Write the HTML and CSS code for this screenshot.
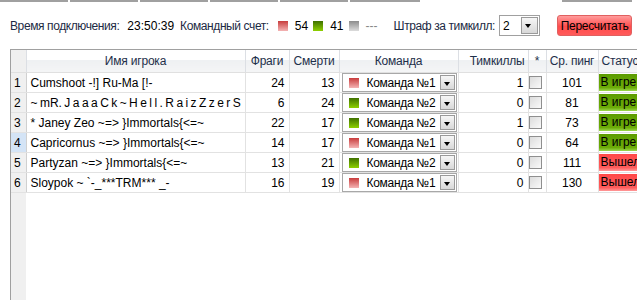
FILE: index.html
```html
<!DOCTYPE html>
<html lang="ru">
  <head>
    <meta charset="UTF-8" />
    <title>Игроки</title>
    <link rel="stylesheet" href="styles.css">
  </head>
  <body>
    <div class="tabs">
      <span class="tab t1"></span><span class="tab t2"></span><span class="tab t3"></span><span class="tab t4"></span><span class="tab t5"></span><span class="tab t6"></span><span class="tab t7"></span>
    </div>

    <div class="toolbar">
      <span class="label">Время подключения:</span>
      <span class="time">23:50:39</span>
      <span class="label score-label">Командный счет:</span>
      <span class="swatch red first"></span><span class="value">54</span>
      <span class="swatch green"></span><span class="value">41</span>
      <span class="swatch gray"></span><span class="value dim">---</span>
      <span class="label fine-label">Штраф за тимкилл:</span>
      <span class="select small"><span class="select-text">2</span><span class="drop"></span></span>
      <button class="recalc">Пересчитать</button>
    </div>

    <div class="grid">
      <table>
        <colgroup>
          <col class="c-num" /><col class="c-name" /><col class="c-frags" /><col class="c-deaths" />
          <col class="c-team" /><col class="c-tk" /><col class="c-star" /><col class="c-ping" /><col class="c-status" />
        </colgroup>
        <thead>
          <tr>
            <th></th>
            <th>Имя игрока</th>
            <th>Фраги</th>
            <th>Смерти</th>
            <th>Команда</th>
            <th class="right">Тимкиллы</th>
            <th>*</th>
            <th>Ср. пинг</th>
            <th class="left">Статус</th>
          </tr>
        </thead>
        <tbody>
          <tr>
            <td class="num">1</td>
            <td class="name">Cumshoot -!] Ru-Ma [!-</td>
            <td class="right">24</td>
            <td class="right">13</td>
            <td class="team"><span class="select"><span class="swatch red"></span><span class="select-text">Команда №1</span><span class="drop"></span></span></td>
            <td class="right">1</td>
            <td class="star"><span class="check"></span></td>
            <td class="center">101</td>
            <td><span class="status ingame">В игре</span></td>
          </tr>
          <tr>
            <td class="num">2</td>
            <td class="name spaced">~ mR. J a a a C k ~ H e l l . R a i z Z z e r S</td>
            <td class="right">6</td>
            <td class="right">24</td>
            <td class="team"><span class="select"><span class="swatch green"></span><span class="select-text">Команда №2</span><span class="drop"></span></span></td>
            <td class="right">0</td>
            <td class="star"><span class="check"></span></td>
            <td class="center">81</td>
            <td><span class="status ingame">В игре</span></td>
          </tr>
          <tr>
            <td class="num">3</td>
            <td class="name">* Janey Zeo ~=&gt; }Immortals{&lt;=~</td>
            <td class="right">22</td>
            <td class="right">17</td>
            <td class="team"><span class="select"><span class="swatch green"></span><span class="select-text">Команда №2</span><span class="drop"></span></span></td>
            <td class="right">1</td>
            <td class="star"><span class="check"></span></td>
            <td class="center">73</td>
            <td><span class="status ingame">В игре</span></td>
          </tr>
          <tr>
            <td class="num current">4</td>
            <td class="name">Capricornus ~=&gt; }Immortals{&lt;=~</td>
            <td class="right">14</td>
            <td class="right">17</td>
            <td class="team"><span class="select"><span class="swatch red"></span><span class="select-text">Команда №1</span><span class="drop"></span></span></td>
            <td class="right">0</td>
            <td class="star"><span class="check"></span></td>
            <td class="center">64</td>
            <td><span class="status ingame">В игре</span></td>
          </tr>
          <tr>
            <td class="num">5</td>
            <td class="name">Partyzan ~=&gt; }Immortals{&lt;=~</td>
            <td class="right">13</td>
            <td class="right">21</td>
            <td class="team"><span class="select"><span class="swatch green"></span><span class="select-text">Команда №2</span><span class="drop"></span></span></td>
            <td class="right">0</td>
            <td class="star"><span class="check"></span></td>
            <td class="center">111</td>
            <td><span class="status left-game">Вышел</span></td>
          </tr>
          <tr>
            <td class="num">6</td>
            <td class="name">Sloypok ~ `-_***TRM*** _-</td>
            <td class="right">16</td>
            <td class="right">19</td>
            <td class="team"><span class="select"><span class="swatch red"></span><span class="select-text">Команда №1</span><span class="drop"></span></span></td>
            <td class="right">0</td>
            <td class="star"><span class="check"></span></td>
            <td class="center">130</td>
            <td><span class="status left-game">Вышел</span></td>
          </tr>
        </tbody>
      </table>
    </div>
  </body>
</html>
```

FILE: styles.css
```css
body {
  margin: 0;
  font-family: "Liberation Sans", Arial, sans-serif;
  font-size: 12px;
  color: #000;
  background: #fff;
  overflow: hidden;
}
.tabs {
  display: flex;
  height: 2px;
}
.tab {
  height: 2px;
  background-color: #a0a0a0;
  margin-right: 2px;
}
.t1 { width: 68px; }
.t2 { width: 68px; }
.t3 { width: 68px; }
.t4 { width: 68px; }
.t5 { width: 68px; }
.t6 { width: 70px; margin-right: 142px; }
.t7 { width: 70px; }
.toolbar {
  display: flex;
  align-items: center;
  height: 47px;
  padding-left: 10px;
  white-space: nowrap;
}
.toolbar > * {
  flex-shrink: 0;
}
.label {
  color: #1c2a44;
  letter-spacing: -0.4px;
}
.time {
  margin-left: 8px;
}
.score-label {
  margin-left: 6px;
}
.value {
  margin: 0 5px 0 7px;
}
.dim {
  color: #888;
}
.fine-label {
  margin-left: 11px;
}
.swatch {
  display: inline-block;
  flex-shrink: 0;
  width: 10px;
  height: 10px;
}
.swatch.first {
  margin-left: 9px;
}
.swatch.red {
  background: linear-gradient(#c83c3c, #f4b4b4);
}
.swatch.green {
  background: linear-gradient(#3f7000, #8ed000);
}
.swatch.gray {
  background: linear-gradient(#8c8c8c, #dcdcdc);
}
.select {
  display: flex;
  align-items: center;
  box-sizing: border-box;
  border: 1px solid #a0a0a0;
  background: #fff;
  padding: 1px;
}
.select.small {
  width: 41px;
  height: 21px;
  margin-left: 4px;
  padding-left: 3px;
}
.select-text {
  flex: 1;
  letter-spacing: -0.3px;
}
.drop {
  box-sizing: border-box;
  flex-shrink: 0;
  width: 17px;
  height: 100%;
  border: 1px solid #9a9a9a;
  background: linear-gradient(#f6f6f6, #d8d8d8);
  position: relative;
}
.drop::after {
  content: "";
  position: absolute;
  left: 3px;
  top: 6px;
  border-left: 3.5px solid transparent;
  border-right: 3.5px solid transparent;
  border-top: 4px solid #000;
}
.recalc {
  margin-left: 17px;
  width: 75px;
  height: 21px;
  padding: 0;
  font: inherit;
  letter-spacing: -0.3px;
  color: #000;
  border: 1px solid #e06060;
  border-radius: 3px;
  background: linear-gradient(#ff9c9c, #ff4c4c 55%, #ff5a5a);
}
.grid {
  margin-left: 10px;
  height: 251px;
  border-top: 1px solid #a0a0a0;
  border-left: 1px solid #a0a0a0;
  background: linear-gradient(to right, #f0f0f0 15px, #fff 15px);
}
table {
  border-collapse: collapse;
  table-layout: fixed;
  width: 700px;
}
.c-num { width: 15px; }
.c-name { width: 219px; }
.c-frags { width: 44px; }
.c-deaths { width: 50px; }
.c-team { width: 119px; }
.c-tk { width: 70px; }
.c-star { width: 18px; }
.c-ping { width: 52px; }
.c-status { width: 113px; }
th {
  height: 22px;
  padding: 0 3px;
  font-weight: normal;
  letter-spacing: -0.2px;
  color: #1e2f4a;
  background: linear-gradient(#fff, #fff 45%, #eef0f2 45%, #f4f5f6);
  border-right: 1px solid #dcdfe4;
  border-bottom: 1px solid #e0e0e0;
  white-space: nowrap;
  overflow: hidden;
}
th:first-child {
  background: #f0f0f0;
}
td {
  height: 19px;
  padding: 0 4px;
  box-sizing: border-box;
  border-right: 1px solid #e2e2e2;
  border-bottom: 1px solid #e2e2e2;
  white-space: nowrap;
  overflow: hidden;
}
td.num {
  padding: 0 0 0 3px;
  background: #f0f0f0;
  border-right: 1px solid #d0d0d0;
}
td.current {
  background: #d4e4f6;
}
td.spaced {
  word-spacing: -0.9px;
}
.right {
  text-align: right;
}
.left {
  text-align: left;
}
.center {
  text-align: center;
}
td.team {
  padding: 0 1px 0 2px;
}
td.team .select {
  height: 19px;
  border-color: #a8a8a8;
  padding: 1px;
}
td.team .swatch {
  margin: 0 8px 0 5px;
}
td.team .drop {
  width: 15px;
  height: 15px;
}
td.star {
  padding: 0;
}
.check {
  display: block;
  width: 13px;
  height: 13px;
  box-sizing: border-box;
  border: 1px solid #8f8f8f;
  background: linear-gradient(135deg, #dcdcdc, #fafafa);
}
td:last-child {
  padding: 0;
}
.status {
  display: block;
  height: 17px;
  line-height: 17px;
  padding-left: 2px;
}
.ingame {
  background: linear-gradient(#5c9c00, #6cac08 80%, #9cd850);
}
.left-game {
  background: linear-gradient(#ff4848, #ff5c5c 80%, #ff9a9a);
}
```
